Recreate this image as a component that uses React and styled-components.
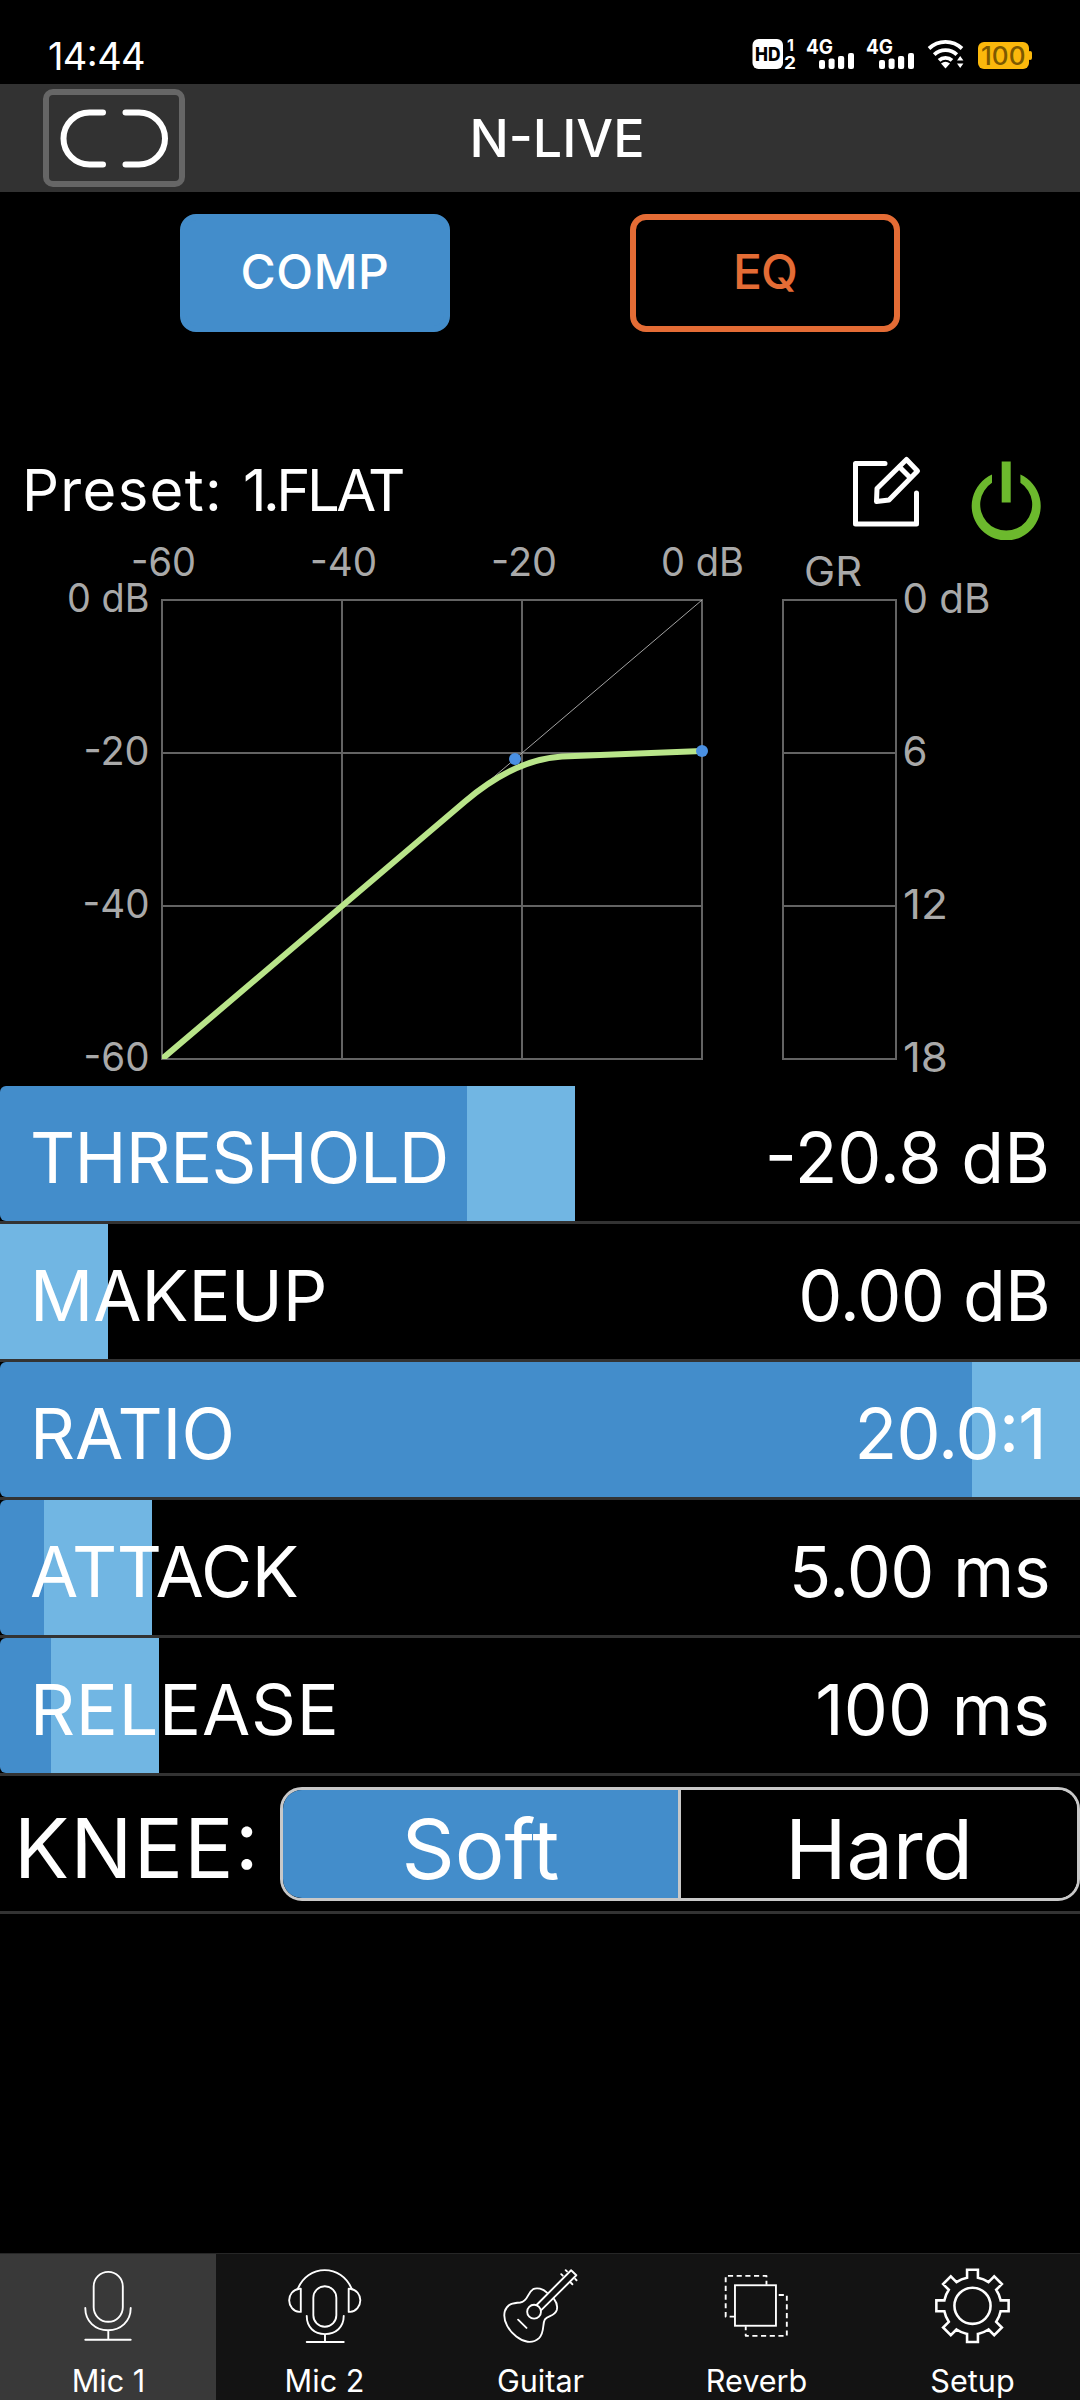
import React from "react";
import styled, { createGlobalStyle } from "styled-components";

const BLUE = "#438dcb";
const LIGHT_BLUE = "#71b6e3";
const ORANGE = "#e46c35";
const LINE = "#333333";

const GlobalStyle = createGlobalStyle`
  html, body { margin: 0; padding: 0; background: #000; }
  * { box-sizing: border-box; }
`;

const Screen = styled.main`
  width: 1080px;
  height: 2400px;
  display: flex;
  flex-direction: column;
  overflow: hidden;
  background: #000;
  color: #fff;
  font-family: Inter, Roboto, "Liberation Sans", sans-serif;
  font-feature-settings: "case";
  white-space: nowrap;
`;

const StatusBar = styled.div`
  height: 84px;
  flex: none;
  display: flex;
  justify-content: space-between;
  padding: 28px 46px 0 48px;
`;

const Clock = styled.span`
  height: 56px;
  line-height: 56px;
  font-size: 38px;
  letter-spacing: -0.6px;
`;

const Header = styled.header`
  height: 108px;
  flex: none;
  display: grid;
  grid-template-columns: 142px 1fr 142px;
  align-items: center;
  padding: 0 9px 0 43px;
  background: #323232;
`;

const LinkButton = styled.button`
  width: 142px;
  height: 98px;
  padding: 0;
  display: flex;
  align-items: center;
  justify-content: center;
  border: 6px solid #666;
  border-radius: 10px;
  background: transparent;
`;

const Title = styled.h1`
  margin: 0;
  text-align: center;
  font-size: 52px;
  font-weight: 500;
`;

const ModeTabs = styled.nav`
  flex: none;
  display: flex;
  gap: 180px;
  padding: 22px 180px 0;
`;

const ModeTab = styled.button`
  width: 270px;
  height: 118px;
  padding: 0 0 3px;
  border: 6px solid ${(p) => (p.$active ? BLUE : ORANGE)};
  border-radius: 16px;
  background: ${(p) => (p.$active ? BLUE : "#000")};
  color: ${(p) => (p.$active ? "#fff" : ORANGE)};
  font: 500 48px Inter, Roboto, sans-serif;
  letter-spacing: ${(p) => p.$spacing || 0}px;
`;

const PresetBar = styled.div`
  height: 80px;
  margin-top: 118px;
  flex: none;
  display: flex;
  align-items: flex-start;
  padding: 0 39px 0 22px;
`;

const PresetName = styled.div`
  flex: 1;
  height: 80px;
  display: flex;
  gap: 20px;
  line-height: 80px;
  font-size: 58px;
  font-feature-settings: normal;
`;

const PresetPart = styled.span`
  letter-spacing: ${(p) => p.$spacing}px;
`;

const EditIcon = styled.svg`
  width: 70px;
  height: 72px;
  margin: 5px 50px 0 0;
  flex: none;
`;

const PowerIcon = styled.svg`
  width: 70px;
  height: 80px;
  margin-top: 10px;
  flex: none;
`;

const Graphs = styled.svg`
  width: 1080px;
  height: 556px;
  flex: none;
  display: block;
  font-family: Inter, Roboto, sans-serif;
`;

const Row = styled.div`
  position: relative;
  height: 138px;
  flex: none;
  display: flex;
  align-items: center;
  justify-content: space-between;
  padding: 8px 30px 0;
  border-bottom: 3px solid ${LINE};
  font-size: 70px;
`;

const Track = styled.div`
  position: absolute;
  inset: 0;
  display: flex;
`;

const Fill = styled.div`
  background: ${BLUE};
  border-radius: 6px 0 0 6px;
`;

const Handle = styled.div`
  width: 108px;
  background: ${LIGHT_BLUE};
`;

const RowText = styled.span`
  position: relative;
  letter-spacing: ${(p) => p.$spacing || 0}px;
  padding-right: ${(p) => p.$inset || 0}px;
`;

const KneeRow = styled.div`
  height: 138px;
  flex: none;
  display: flex;
  align-items: center;
  border-bottom: 3px solid ${LINE};
`;

const KneeLabel = styled.span`
  width: 280px;
  padding: 9px 0 0 14px;
  font-size: 82px;
  letter-spacing: 1.4px;
`;

const Segments = styled.div`
  width: 800px;
  height: 114px;
  display: grid;
  grid-template-columns: 395px 1fr;
  overflow: hidden;
  border: 3px solid #c8c8c8;
  border-radius: 22px;
`;

const Segment = styled.button`
  padding: 9px 0 0;
  border: 0;
  border-left: ${(p) => (p.$active ? "0" : "3px solid #c8c8c8")};
  background: ${(p) => (p.$active ? BLUE : "#000")};
  color: #fff;
  font: 400 83px Inter, Roboto, sans-serif;
  letter-spacing: ${(p) => p.$spacing || 0}px;
`;

const Spacer = styled.div`
  flex: 1;
`;

const TabBar = styled.nav`
  height: 147px;
  flex: none;
  display: flex;
  border-top: 1px solid #262626;
`;

const TabItem = styled.div`
  width: 216px;
  display: flex;
  flex-direction: column;
  align-items: center;
  padding-top: 12px;
  background: ${(p) => (p.$active ? "#393939" : "#131313")};
`;

const TabIcon = styled.svg`
  width: 80px;
  height: 80px;
  fill: none;
  stroke: #fff;
  stroke-width: ${(p) => p.$weight || 1.9};
  stroke-linecap: round;
  stroke-linejoin: round;
`;

const TabLabel = styled.span`
  height: 38px;
  margin-top: 17px;
  padding-left: 1px;
  line-height: 38px;
  font-size: 30.6px;
`;

function Signal({ x }) {
  return (
    <g transform={`translate(${x} 0)`} fill="#fff">
      <text x="-1" y="26" fontSize="20" fontWeight="700" textLength="27" lengthAdjust="spacingAndGlyphs">4G</text>
      <rect x="12" y="32" width="6" height="9" rx="2" />
      <rect x="21.6" y="30.6" width="6" height="10.4" rx="2" />
      <rect x="31" y="28" width="6.2" height="13" rx="2" />
      <rect x="41" y="25" width="6" height="16" rx="2" />
    </g>
  );
}

function StatusIcons() {
  return (
    <svg width="282" height="56" viewBox="0 0 282 56" fontFamily="Inter, Roboto, sans-serif">
      <rect x="0.5" y="11" width="30.5" height="30" rx="6" fill="#fff" />
      <text x="3" y="33" fontSize="19" fontWeight="800" fill="#000" textLength="25.5" lengthAdjust="spacingAndGlyphs">HD</text>
      <text x="35" y="22.5" fontSize="16" fontWeight="700" fill="#fff">1</text>
      <text x="32" y="41" fontSize="17" fontWeight="700" fill="#fff" textLength="12" lengthAdjust="spacingAndGlyphs">2</text>
      <Signal x={55} />
      <Signal x={115} />
      <g fill="none" stroke="#fff" strokeWidth="3.8">
        <path d="M177 20.5 A24 24 0 0 1 210 20.5" />
        <path d="M182.2 26.6 A16.5 16.5 0 0 1 204.8 26.6" />
        <path d="M187 32.4 A9.5 9.5 0 0 1 200 32.4" />
      </g>
      <path d="M189 35.5 Q193.5 32 198 35.5 L193.5 40.5 Z" fill="#fff" />
      <path d="M205 32.5 L208.2 28 L211.4 32.5 Z M205 35.5 L208.2 40 L211.4 35.5 Z" fill="#fff" />
      <rect x="226" y="14" width="51" height="27" rx="6" fill="#fbb80c" />
      <rect x="276" y="23" width="4" height="9" rx="2" fill="#fbb80c" />
      <text x="229" y="36.6" fontSize="25" fontWeight="500" fill="#7d5900" textLength="44.5" lengthAdjust="spacingAndGlyphs">100</text>
    </svg>
  );
}

function Label({ x, y, w, end, size = 39, children }) {
  return (
    <text
      x={x}
      y={y}
      textAnchor={end ? "end" : "start"}
      fontSize={size}
      fill="#a9a9a9"
      textLength={w}
      lengthAdjust="spacingAndGlyphs"
    >
      {children}
    </text>
  );
}

function CompressorGraph() {
  return (
    <Graphs viewBox="0 530 1080 556">
      <g stroke="#636363" strokeWidth="2" fill="none">
        <path d="M161 600H703M162 753H702M162 906H702M161 1059H703" />
        <path d="M162 600V1059M342 600V1059M522 600V1059M702 600V1059" />
        <path d="M783 600H896V1059H783ZM783 753H896M783 906H896" />
      </g>
      <path d="M162 1059L702 600" stroke="#b4b4b4" strokeWidth="0.9" />
      <clipPath id="plot">
        <rect x="162" y="600" width="541" height="459" />
      </clipPath>
      <path
        d="M155 1065L465 801.5Q514.5 759.4 562 756.5L702 751"
        fill="none"
        stroke="#b9e58a"
        strokeWidth="6"
        clipPath="url(#plot)"
      />
      <circle cx="515" cy="759" r="6" fill="#4a90e2" />
      <circle cx="702" cy="751" r="6" fill="#4a90e2" />

      <Label x={131} y={575.5} w={65}>-60</Label>
      <Label x={310} y={575.5} w={67}>-40</Label>
      <Label x={491} y={575.5} w={66}>-20</Label>
      <Label x={661} y={575.5} w={83}>0 dB</Label>

      <Label end x={149.5} y={612} w={82.5}>0 dB</Label>
      <Label end x={149.5} y={764.5} w={66}>-20</Label>
      <Label end x={149.5} y={917.5} w={67}>-40</Label>
      <Label end x={149.5} y={1070.5} w={66}>-60</Label>

      <Label x={804} y={585.5} w={58} size={41}>GR</Label>
      <Label x={902.5} y={612.5} w={88} size={41}>0 dB</Label>
      <Label x={902.5} y={765.5} w={25} size={41}>6</Label>
      <Label x={903} y={918.5} w={45} size={41}>12</Label>
      <Label x={903} y={1071.5} w={45} size={41}>18</Label>
    </Graphs>
  );
}

const PARAMS = [
  { name: "THRESHOLD", value: "-20.8 dB", fill: 467, nameSpacing: -0.7, valueSpacing: 0 },
  { name: "MAKEUP", value: "0.00 dB", fill: 0, nameSpacing: 0, valueSpacing: -0.8 },
  { name: "RATIO", value: "20.0:1", fill: 972, nameSpacing: 0, valueSpacing: -0.8, valueInset: 4 },
  { name: "ATTACK", value: "5.00 ms", fill: 44, nameSpacing: -0.4, valueSpacing: -0.6 },
  { name: "RELEASE", value: "100 ms", fill: 51, nameSpacing: 0.8, valueSpacing: 0 },
];

function gearPath() {
  const body = 29;
  const tip = 37;
  const pts = [];
  for (let i = 0; i < 8; i++) {
    const a = (i * Math.PI) / 4;
    const at = (r, off) => {
      const along = Math.sqrt(r * r - off * off);
      return `${(40.5 + along * Math.cos(a) - off * Math.sin(a)).toFixed(2)} ${(40.3 + along * Math.sin(a) + off * Math.cos(a)).toFixed(2)}`;
    };
    pts.push(`${i ? `A${body} ${body} 0 0 1 ` : "M"}${at(body, -5.5)}`, `L${at(tip, -5.5)}`, `L${at(tip, 5.5)}`, `L${at(body, 5.5)}`);
  }
  return `${pts.join("")}A${body} ${body} 0 0 1 ${(40.5 + Math.sqrt(body * body - 30.25)).toFixed(2)} 34.8Z`;
}

const TABS = [
  {
    name: "Mic 1",
    art: (
      <>
        <rect x="25.5" y="6" width="29.5" height="50.5" rx="14.7" />
        <path d="M17 42.5C17 56 27 65 40 65S63 56 63 42.5M40.3 65V74.5M17 74.7H63" />
      </>
    ),
  },
  {
    name: "Mic 2",
    art: (
      <>
        <path d="M13.5 23C18.5 11 29 4.2 40.7 4.2S63 11 68 23" />
        <path d="M16.5 23H15C8.5 24 4.7 29 4.7 34.8S9 46 15 46.5H16.5Z" />
        <path d="M65 23H66.5C73 24 76.8 29 76.8 34.8S72.5 46 66.5 46.5H65Z" />
        <rect x="29.2" y="20.5" width="23.3" height="41" rx="11.6" />
        <path d="M22.5 50.5C22.5 62 30 69 41 69S60 62 60 50.5M41 69V77M22.5 77H60" />
      </>
    ),
  },
  {
    name: "Guitar",
    art: (
      <>
        <path d="M47 27C43 23 37 21.5 33 23.5C27 27 28 36 20 37C13 37.5 7 38 4.3 46C2 56 9 66 16 71.5C23 77 32 79.5 39 73C45 67 42 59 45 54C48 50 55 51 57 44.5C58 40.5 57 37 54.3 33.5" />
        <path d="M36.5 39.5L71.5 4.3L76.8 9.4L41.5 44.5" />
        <circle cx="34" cy="46.3" r="7" />
        <path d="M17.8 54.3L26.3 62.7M61.5 8.3L63 9.8M66 4.2L67.3 5.5M71.3 17L72.8 18.5M75.6 13L77 14.4" />
      </>
    ),
  },
  {
    name: "Reverb",
    art: (
      <>
        <g strokeDasharray="5.2 3.6" strokeLinecap="butt">
          <path d="M18.5 51.3H9.3V10H50.6V19" />
          <path d="M63 29.4H71.2V70.7H29.6V61" />
        </g>
        <rect x="18.7" y="19.5" width="41.5" height="41" strokeLinejoin="miter" />
      </>
    ),
  },
  {
    name: "Setup",
    weight: 2.6,
    art: (
      <g strokeLinejoin="miter">
        <path d={gearPath()} />
        <circle cx="40.5" cy="40.3" r="18.3" />
      </g>
    ),
  },
];

export default function App() {
  return (
    <>
      <GlobalStyle />
      <Screen>
        <StatusBar>
          <Clock>14:44</Clock>
          <StatusIcons />
        </StatusBar>
        <Header>
          <LinkButton aria-label="Link">
            <svg width="112" height="62" viewBox="0 0 112 62" fill="none" stroke="#fff" strokeWidth="6" strokeLinecap="round">
              <path d="M45 5.5H31.5A26 26 0 0 0 31.5 57.5H45M67.5 5.5H81A26 26 0 0 1 81 57.5H67.5" />
            </svg>
          </LinkButton>
          <Title>N-LIVE</Title>
        </Header>
        <ModeTabs>
          <ModeTab $active $spacing={0.6}>COMP</ModeTab>
          <ModeTab $spacing={-0.8}>EQ</ModeTab>
        </ModeTabs>
        <PresetBar>
          <PresetName>
            <PresetPart $spacing={1.3}>Preset:</PresetPart>
            <PresetPart $spacing={-3.5}>1.FLAT</PresetPart>
          </PresetName>
          <EditIcon viewBox="0 0 70 72" fill="none" stroke="#fff" strokeWidth="5" strokeLinecap="round" strokeLinejoin="round">
            <path d="M34 8.5H4.5V69H65.5V38" />
            <path d="M25.5 46.5L26 33.5L55.5 4.5L66.5 16L38 45Z" />
            <path d="M48.5 12L59 22.5" />
          </EditIcon>
          <PowerIcon viewBox="0 0 70 80" fill="none" stroke="#6cb92d">
            <path d="M35.2 1.5V42.5" strokeWidth="9" />
            <path d="M21 14.5V22.8A26 26 0 1 0 49.4 22.8V14.5A34.5 34.5 0 1 1 21 14.5Z" fill="#6cb92d" stroke="none" />
          </PowerIcon>
        </PresetBar>
        <CompressorGraph />
        {PARAMS.map((p) => (
          <Row key={p.name}>
            <Track>
              <Fill style={{ width: p.fill }} />
              <Handle />
            </Track>
            <RowText $spacing={p.nameSpacing}>{p.name}</RowText>
            <RowText $spacing={p.valueSpacing} $inset={p.valueInset}>{p.value}</RowText>
          </Row>
        ))}
        <KneeRow>
          <KneeLabel>KNEE:</KneeLabel>
          <Segments>
            <Segment $active>Soft</Segment>
            <Segment $spacing={-0.3}>Hard</Segment>
          </Segments>
        </KneeRow>
        <Spacer />
        <TabBar>
          {TABS.map((t, i) => (
            <TabItem key={t.name} $active={i === 0}>
              <TabIcon viewBox="0 0 80 80" $weight={t.weight}>{t.art}</TabIcon>
              <TabLabel>{t.name}</TabLabel>
            </TabItem>
          ))}
        </TabBar>
      </Screen>
    </>
  );
}
